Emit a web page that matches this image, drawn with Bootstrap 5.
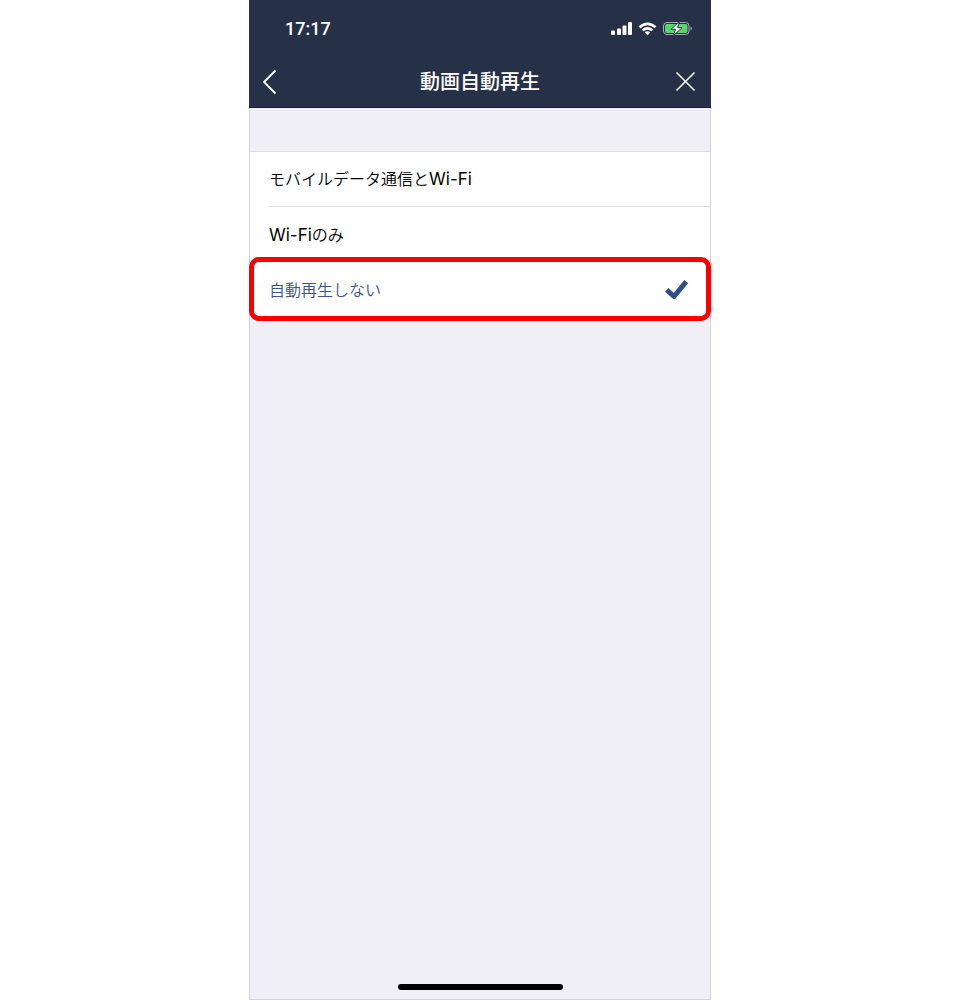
<!DOCTYPE html>
<html lang="ja">
<head>
<meta charset="utf-8">
<meta name="viewport" content="width=device-width, initial-scale=1">
<title>動画自動再生</title>
<link href="https://cdn.jsdelivr.net/npm/bootstrap@5.3.0/dist/css/bootstrap.min.css" rel="stylesheet">
<style>
  body { font-family: Inter, "Noto Sans CJK JP", sans-serif; background: #fff; color: #000; }
  .phone { max-width: 462px; background: #efeff5; border: solid #d3d3d8; border-width: 0 1px 1px; }
  .top { background: #263148; color: #fff; margin: 0 -1px; border-bottom: 1px solid #141c38; }
  .status { height: 57px; padding: 0 18px 0 36px; }
  .clock { font-family: Roboto, Inter, sans-serif; font-size: 18px; line-height: 24px; font-weight: 500; }
  .title-bar { height: 50px; padding: 0 12px; }
  .title-bar h1 { font-size: 20px; line-height: 24px; font-weight: 500; }
  .nav-icon { width: 28px; height: 28px; color: #fff; }
  .choices { margin-top: 43px; background: #fff; border-top: 1px solid #dcdce1; }
  .choice { height: 55px; margin-left: 19px; padding-right: 21px; font-size: 16px; line-height: 24px; font-weight: 350; cursor: pointer; }
  .choice.divided { border-bottom: 1px solid #e0e0e4; }
  .choice .latin { font-size: 17px; font-weight: 400; }
  .choice .tick { visibility: hidden; }
  .choice:has(input:checked) { color: #3a5488; }
  .choice input:checked ~ .tick { visibility: visible; }
  .marker { inset: -5px -1px -4px; border: 5px solid #f80000; border-radius: 10px; pointer-events: none; }
  .home-bar { width: 165px; height: 6px; margin-bottom: 9px; background: #000; }
</style>
</head>
<body>
<div class="phone mx-auto min-vh-100 d-flex flex-column">
  <header class="top">
    <div class="status d-flex align-items-center justify-content-between">
      <span class="clock">17:17</span>
      <svg width="83" height="18" viewBox="0 0 83 18" fill="#fff" role="img" aria-label="電波、Wi-Fi、充電中">
        <rect x="1" y="10.500" width="4" height="4.500" rx="1"/>
        <rect x="7" y="8.500" width="4" height="6.500" rx="1"/>
        <rect x="12.500" y="5.500" width="4" height="9.500" rx="1"/>
        <rect x="18" y="2" width="4" height="13" rx="1"/>
        <path d="M28.500 6.300Q37.500-1.300 46.500 6.300L44.600 8.200Q37.500 2.300 30.400 8.200Z"/>
        <path d="M31.700 9.400Q37.500 4.700 43.300 9.400L41.400 11.300Q37.500 8.100 33.600 11.300Z"/>
        <path d="M34.600 12.300Q37.500 10.100 40.400 12.300L37.500 15.200Z"/>
        <rect x="53.500" y="2.500" width="25.500" height="12" rx="3.500" fill="none" stroke="#a5adba"/>
        <rect x="55" y="4" width="22.500" height="9" rx="2" fill="#56d768"/>
        <path d="M80.500 6.300Q82 7 82 8.500T80.500 10.700Z" fill="#929baa"/>
        <path d="M69.500 1.500L61 9.300H65.600L63.300 15.700L72 7.700H67.600Z" stroke="#263148" stroke-width="1"/>
      </svg>
    </div>
    <div class="title-bar d-flex align-items-center justify-content-between">
      <button type="button" class="btn nav-icon border-0 p-0 d-flex" aria-label="戻る">
        <svg width="28" height="28" viewBox="0 0 28 28" fill="none" stroke="currentColor" stroke-width="1.800"><path d="M14.500 2.500L3 14L14.500 25.500"/></svg>
      </button>
      <h1 class="m-0">動画自動再生</h1>
      <button type="button" class="btn nav-icon border-0 p-0 d-flex" aria-label="閉じる">
        <svg width="28" height="28" viewBox="0 0 28 28" fill="none" stroke="currentColor" stroke-width="1.600"><path d="M5.500 4.500L23.500 22.500M23.500 4.500L5.500 22.500"/></svg>
      </button>
    </div>
  </header>
  <main class="choices">
    <label class="choice divided d-flex align-items-center justify-content-between" for="both">
      <input class="visually-hidden" type="radio" name="autoplay" id="both">
      <span>モバイルデータ通信と<span class="latin">Wi-Fi</span></span>
    </label>
    <label class="choice d-flex align-items-center justify-content-between" for="wifi">
      <input class="visually-hidden" type="radio" name="autoplay" id="wifi">
      <span><span class="latin">Wi-Fi</span>のみ</span>
    </label>
    <div class="position-relative">
      <label class="choice d-flex align-items-center justify-content-between" for="never">
        <input class="visually-hidden" type="radio" name="autoplay" id="never" checked>
        <span>自動再生しない</span>
        <svg class="tick" width="24" height="22" viewBox="0 0 24 22" fill="none" stroke="#2f4f88" stroke-width="5" stroke-linejoin="round" aria-hidden="true"><path d="M1.800 10.800L9 17.500L21.200 2.600"/></svg>
      </label>
      <div class="marker position-absolute"></div>
    </div>
  </main>
  <div class="home-bar rounded-pill mt-auto mx-auto"></div>
</div>
<script src="https://cdn.jsdelivr.net/npm/bootstrap@5.3.0/dist/js/bootstrap.bundle.min.js"></script>
</body>
</html>
